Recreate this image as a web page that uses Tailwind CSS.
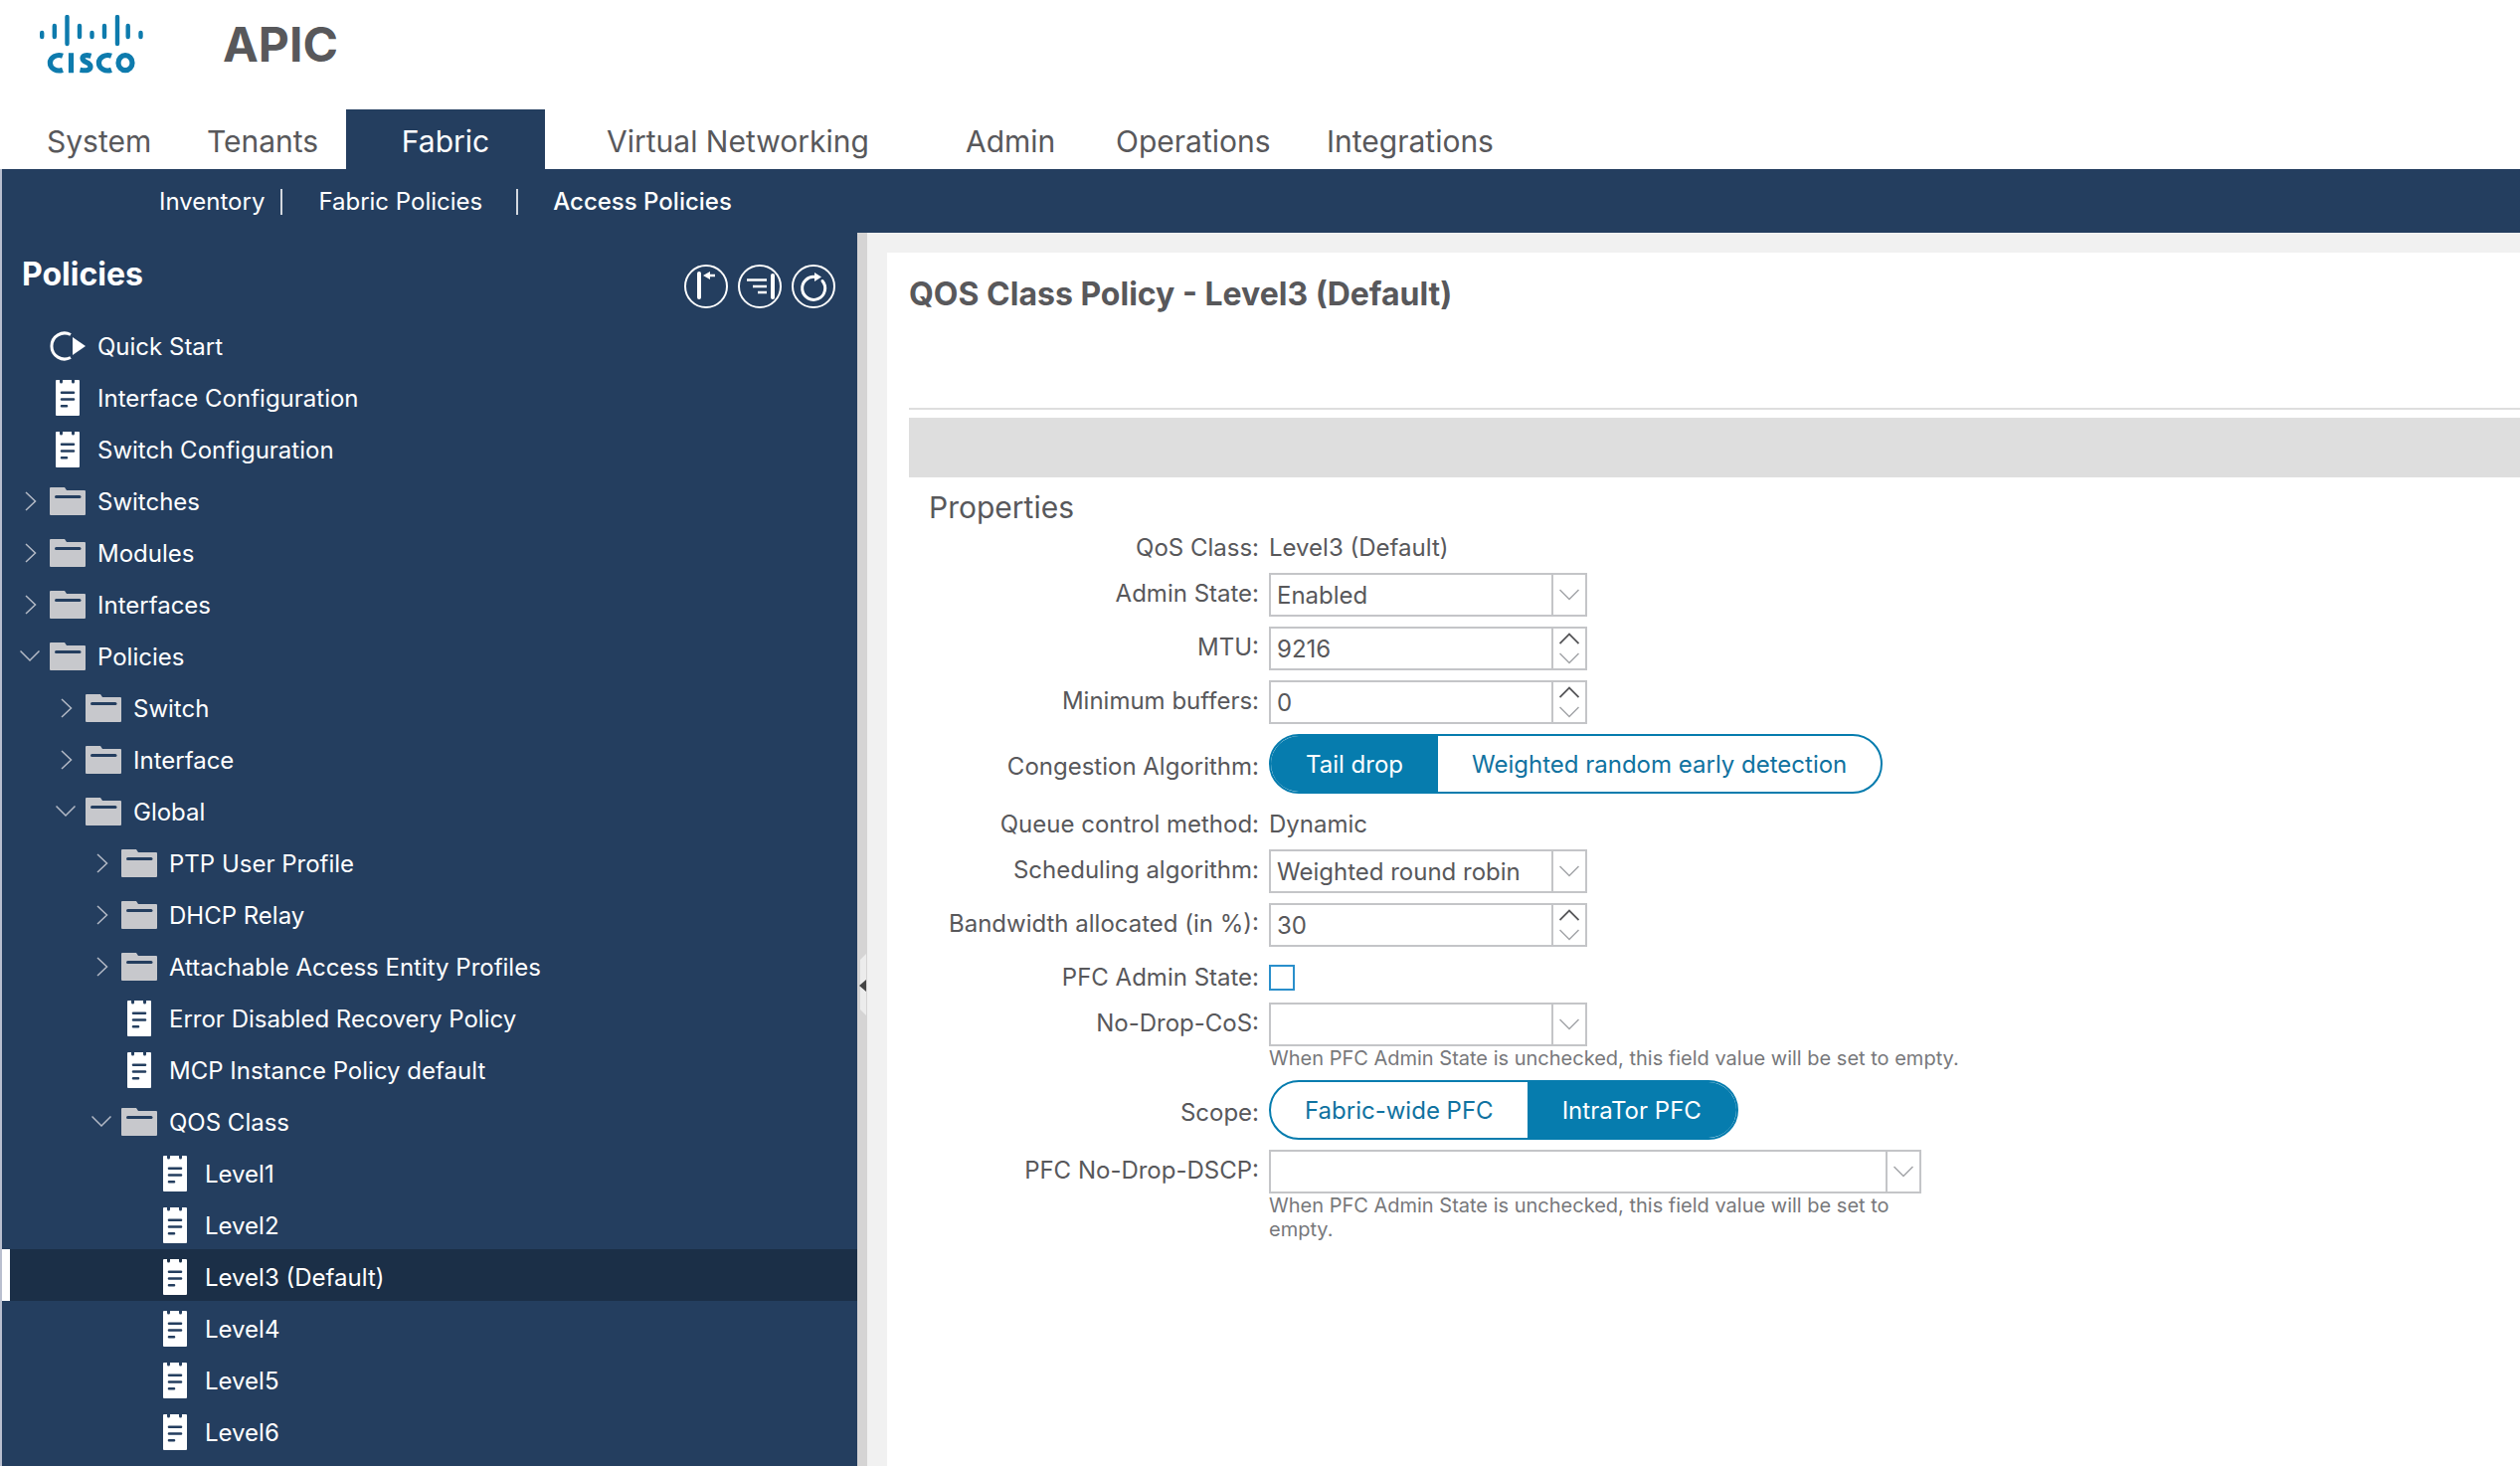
<!DOCTYPE html>
<html lang="en">
<head>
<meta charset="utf-8">
<meta name="viewport" content="width=device-width, initial-scale=1">
<title>APIC</title>
<script src="https://cdn.jsdelivr.net/npm/@tailwindcss/browser@4"></script>
</head>
<body class="flex min-h-screen flex-col bg-white font-['Inter',sans-serif] text-2xl leading-[30px] text-[#58585b]">

<svg class="hidden" aria-hidden="true">
  <symbol id="doc" viewBox="0 0 24 36"><path fill="#fff" d="M1 0H4V2a1 1 0 0 0 3 0V0H16V2a1 1 0 0 0 3 0V0H23a1 1 0 0 1 1 1V35a1 1 0 0 1-1 1H1a1 1 0 0 1-1-1V1a1 1 0 0 1 1-1Z"/><path stroke="#243e5f" stroke-width="2.6" stroke-linecap="round" d="M6 12.700H18M6 19.500H18M6 26.200H11"/></symbol>
  <symbol id="folder" viewBox="0 0 36 28"><path fill="#c7c8cc" d="M1 0H15L17 3H35a1 1 0 0 1 1 1V27a1 1 0 0 1-1 1H1a1 1 0 0 1-1-1V1a1 1 0 0 1 1-1Z"/><path stroke="#243e5f" stroke-width="3" stroke-linecap="round" d="M6.500 9.500H30"/></symbol>
  <symbol id="right" viewBox="0 0 20 20"><path fill="none" stroke="#b4bac6" stroke-width="1.500" d="M6 1L15.500 10L6 19"/></symbol>
  <symbol id="down" viewBox="0 0 20 20"><path fill="none" stroke="#b4bac6" stroke-width="1.500" d="M.5 4.500L10 14L19.500 4.500"/></symbol>
  <symbol id="pick" viewBox="0 0 20 12"><path fill="none" stroke="#a3a5a8" stroke-width="1.500" d="M.5 1L10 10.500L19.500 1"/></symbol>
  <symbol id="up" viewBox="0 0 20 12"><path fill="none" stroke="#58585b" stroke-width="1.800" d="M.5 11L10 1.500L19.500 11"/></symbol>
</svg>

<header>
  <div class="flex h-[110px] items-start pl-10 pt-[15px]">
    <svg class="h-[60px] w-[104px]" viewBox="0 0 104 60" role="img" aria-label="Cisco">
      <g stroke="#0e7bad" stroke-width="4.400" stroke-linecap="round"><path d="M2.200 18V22M14.800 11V22M27.500 2V29M40 11V22M52.500 18V22M65 11V22M78 2V29M88.700 11V22M101.500 18V22"/></g>
      <g fill="none" stroke="#0e7bad" stroke-width="5.200"><path d="M23 41.200A9 7.700 0 1 0 23 55.300M31.500 38.200V58.300M51.500 41.200C46 39.700 43 41 43 43.600C43 48.500 51 46.800 51 52C51 55.600 47 56.500 40.500 55.200M72 41.200A9 7.700 0 1 0 72 55.300"/><ellipse cx="86" cy="48.200" rx="7" ry="7.500"/></g>
    </svg>
    <h1 class="ml-20 text-5xl leading-[60px] font-bold">APIC</h1>
  </div>
  <nav class="flex h-[60px] items-stretch text-[30px] leading-9" aria-label="Main">
    <a href="#" class="w-[208px] pt-3.5 pl-[47px]">System</a>
    <a href="#" class="w-[140px] pt-3.5">Tenants</a>
    <a href="#" class="w-[200px] bg-[#243e5f] pt-3.5 text-center text-white">Fabric</a>
    <a href="#" class="ml-[62px] w-[361px] pt-3.5">Virtual Networking</a>
    <a href="#" class="w-[151px] pt-3.5">Admin</a>
    <a href="#" class="w-[212px] pt-3.5">Operations</a>
    <a href="#" class="pt-3.5">Integrations</a>
  </nav>
</header>

<div class="flex flex-1 flex-col border-l-2 border-[#b9bfcf]">
  <nav class="flex h-16 items-center bg-[#243e5f] pt-0.5 pl-[158px] text-white" aria-label="Fabric">
    <a href="#">Inventory</a>
    <span class="ml-4 h-[26px] w-0.5 bg-white/80"></span>
    <a href="#" class="ml-9">Fabric Policies</a>
    <span class="ml-[34px] h-[26px] w-0.5 bg-white/80"></span>
    <a href="#" class="ml-[35px] font-medium">Access Policies</a>
  </nav>

  <div class="flex flex-1">
    <aside class="w-[860px] shrink-0 bg-[#243e5f] text-white">
      <div class="flex h-[86px] justify-between pr-[22px] pl-5 pt-6">
        <h2 class="text-[32px] leading-9 font-bold">Policies</h2>
        <div class="flex gap-2.5 pt-2">
          <button type="button" aria-label="Collapse" class="size-11"><svg class="size-11" viewBox="0 0 44 44" fill="none" stroke="#fff"><circle cx="22" cy="22" r="21" stroke-width="2"/><path stroke-width="4" stroke-linecap="round" d="M15 9V33"/><path stroke-width="2.500" d="M22 11H31"/><path fill="#fff" stroke="none" d="M19 11L26 7V15Z"/></svg></button>
          <button type="button" aria-label="Align" class="size-11"><svg class="size-11" viewBox="0 0 44 44" fill="none" stroke="#fff"><circle cx="22" cy="22" r="21" stroke-width="2"/><path stroke-width="4" stroke-linecap="round" d="M35 11V33"/><path stroke-width="2.500" d="M9 15.500H29M15 22H29M20 28H29"/></svg></button>
          <button type="button" aria-label="Refresh" class="size-11"><svg class="size-11" viewBox="0 0 44 44" fill="none" stroke="#fff"><circle cx="22" cy="22" r="21" stroke-width="2"/><path stroke-width="3" stroke-linecap="round" d="M24 12.500A11.500 11.500 0 1 0 31 16.500"/><path fill="#fff" stroke="none" d="M23 8L30 12.500L23 17Z"/></svg></button>
        </div>
      </div>
      <ul class="[&_svg]:-mt-0.5">
        <li><a href="#" class="flex h-[52px] items-center pt-1.5 pl-12"><svg class="mr-3 h-[30px] w-9" viewBox="0 0 36 30"><path fill="none" stroke="#fff" stroke-width="3" d="M21 3.500A13 13 0 1 0 21 26.500"/><path fill="#fff" d="M23 6L36 15L23 24Z"/></svg>Quick Start</a></li>
        <li><a href="#" class="flex h-[52px] items-center pt-1.5 pl-[54px]"><svg class="mr-[18px] h-9 w-6"><use href="#doc"/></svg>Interface Configuration</a></li>
        <li><a href="#" class="flex h-[52px] items-center pt-1.5 pl-[54px]"><svg class="mr-[18px] h-9 w-6"><use href="#doc"/></svg>Switch Configuration</a></li>
        <li><a href="#" class="flex h-[52px] items-center pt-1.5 pl-[18px]"><svg class="mr-2.5 size-5"><use href="#right"/></svg><svg class="mr-3 h-7 w-9"><use href="#folder"/></svg>Switches</a></li>
        <li><a href="#" class="flex h-[52px] items-center pt-1.5 pl-[18px]"><svg class="mr-2.5 size-5"><use href="#right"/></svg><svg class="mr-3 h-7 w-9"><use href="#folder"/></svg>Modules</a></li>
        <li><a href="#" class="flex h-[52px] items-center pt-1.5 pl-[18px]"><svg class="mr-2.5 size-5"><use href="#right"/></svg><svg class="mr-3 h-7 w-9"><use href="#folder"/></svg>Interfaces</a></li>
        <li><a href="#" class="flex h-[52px] items-center pt-1.5 pl-[18px]"><svg class="mr-2.5 size-5"><use href="#down"/></svg><svg class="mr-3 h-7 w-9"><use href="#folder"/></svg>Policies</a></li>
        <li><a href="#" class="flex h-[52px] items-center pt-1.5 pl-[54px]"><svg class="mr-2.5 size-5"><use href="#right"/></svg><svg class="mr-3 h-7 w-9"><use href="#folder"/></svg>Switch</a></li>
        <li><a href="#" class="flex h-[52px] items-center pt-1.5 pl-[54px]"><svg class="mr-2.5 size-5"><use href="#right"/></svg><svg class="mr-3 h-7 w-9"><use href="#folder"/></svg>Interface</a></li>
        <li><a href="#" class="flex h-[52px] items-center pt-1.5 pl-[54px]"><svg class="mr-2.5 size-5"><use href="#down"/></svg><svg class="mr-3 h-7 w-9"><use href="#folder"/></svg>Global</a></li>
        <li><a href="#" class="flex h-[52px] items-center pt-1.5 pl-[90px]"><svg class="mr-2.5 size-5"><use href="#right"/></svg><svg class="mr-3 h-7 w-9"><use href="#folder"/></svg>PTP User Profile</a></li>
        <li><a href="#" class="flex h-[52px] items-center pt-1.5 pl-[90px]"><svg class="mr-2.5 size-5"><use href="#right"/></svg><svg class="mr-3 h-7 w-9"><use href="#folder"/></svg>DHCP Relay</a></li>
        <li><a href="#" class="flex h-[52px] items-center pt-1.5 pl-[90px]"><svg class="mr-2.5 size-5"><use href="#right"/></svg><svg class="mr-3 h-7 w-9"><use href="#folder"/></svg>Attachable Access Entity Profiles</a></li>
        <li><a href="#" class="flex h-[52px] items-center pt-1.5 pl-[126px]"><svg class="mr-[18px] h-9 w-6"><use href="#doc"/></svg>Error Disabled Recovery Policy</a></li>
        <li><a href="#" class="flex h-[52px] items-center pt-1.5 pl-[126px]"><svg class="mr-[18px] h-9 w-6"><use href="#doc"/></svg>MCP Instance Policy default</a></li>
        <li><a href="#" class="flex h-[52px] items-center pt-1.5 pl-[90px]"><svg class="mr-2.5 size-5"><use href="#down"/></svg><svg class="mr-3 h-7 w-9"><use href="#folder"/></svg>QOS Class</a></li>
        <li><a href="#" class="flex h-[52px] items-center pt-1.5 pl-[162px]"><svg class="mr-[18px] h-9 w-6"><use href="#doc"/></svg>Level1</a></li>
        <li><a href="#" class="flex h-[52px] items-center pt-1.5 pl-[162px]"><svg class="mr-[18px] h-9 w-6"><use href="#doc"/></svg>Level2</a></li>
        <li><a href="#" aria-current="page" class="flex h-[52px] items-center border-l-8 border-white bg-[#1b2f47] pt-1.5 pl-[154px]"><svg class="mr-[18px] h-9 w-6"><use href="#doc"/></svg>Level3 (Default)</a></li>
        <li><a href="#" class="flex h-[52px] items-center pt-1.5 pl-[162px]"><svg class="mr-[18px] h-9 w-6"><use href="#doc"/></svg>Level4</a></li>
        <li><a href="#" class="flex h-[52px] items-center pt-1.5 pl-[162px]"><svg class="mr-[18px] h-9 w-6"><use href="#doc"/></svg>Level5</a></li>
        <li><a href="#" class="flex h-[52px] items-center pt-1.5 pl-[162px]"><svg class="mr-[18px] h-9 w-6"><use href="#doc"/></svg>Level6</a></li>
      </ul>
    </aside>

    <div class="flex w-2.5 shrink-0 items-start justify-end bg-[#d5d4d4] pt-[724px]">
      <button type="button" aria-label="Collapse panel"><svg class="h-16 w-2" viewBox="0 0 8 64"><path fill="#ececec" d="M7 1V63L1 57V7Z"/><path fill="#444" d="M0 33L7 27V39Z"/></svg></button>
    </div>

    <main class="min-w-0 flex-1 bg-[#f1f1f1] pt-5 pl-5">
      <div class="h-full bg-white pt-6 pl-[22px]">
        <h2 class="h-[132px] text-[32px] leading-9 font-bold">QOS Class Policy - Level3 (Default)</h2>
        <div class="border-t-2 border-[#dedede]"></div>
        <div class="mt-2 h-[60px] bg-[#dedede]"></div>
        <h3 class="mt-3 pl-5 text-[30px] leading-9">Properties</h3>

        <form class="mt-2 grid grid-cols-[352px_1fr] gap-x-2.5 gap-y-2.5">
          <span class="h-[30px] text-right">QoS Class:</span>
          <span>Level3 (Default)</span>

          <label for="admin" class="pt-1.5 text-right">Admin State:</label>
          <div class="relative w-80">
            <select id="admin" class="block h-11 w-full appearance-none border-2 border-[#c4c5c8] pt-0.5 pl-1.5"><option>Enabled</option></select>
            <span class="pointer-events-none absolute inset-y-0.5 right-0.5 flex w-[34px] items-center justify-center border-l-2 border-[#c4c5c8]"><svg class="h-3 w-5"><use href="#pick"/></svg></span>
          </div>

          <label for="mtu" class="pt-1.5 text-right">MTU:</label>
          <div class="flex h-11 w-80 border-2 border-[#c4c5c8]">
            <input id="mtu" type="text" inputmode="numeric" value="9216" class="min-w-0 flex-1 pt-0.5 pl-1.5">
            <div class="flex w-[34px] flex-col border-l-2 border-[#c4c5c8]">
              <button type="button" aria-label="Increase" class="flex flex-1 items-center justify-center"><svg class="h-3 w-5"><use href="#up"/></svg></button>
              <button type="button" aria-label="Decrease" class="flex flex-1 items-center justify-center"><svg class="h-3 w-5"><use href="#pick"/></svg></button>
            </div>
          </div>

          <label for="buffers" class="pt-1.5 text-right">Minimum buffers:</label>
          <div class="flex h-11 w-80 border-2 border-[#c4c5c8]">
            <input id="buffers" type="text" inputmode="numeric" value="0" class="min-w-0 flex-1 pt-0.5 pl-1.5">
            <div class="flex w-[34px] flex-col border-l-2 border-[#c4c5c8]">
              <button type="button" aria-label="Increase" class="flex flex-1 items-center justify-center"><svg class="h-3 w-5"><use href="#up"/></svg></button>
              <button type="button" aria-label="Decrease" class="flex flex-1 items-center justify-center"><svg class="h-3 w-5"><use href="#pick"/></svg></button>
            </div>
          </div>

          <span id="congestion" class="pt-[18px] text-right">Congestion Algorithm:</span>
          <div role="group" aria-labelledby="congestion" class="flex h-[60px] w-fit overflow-hidden rounded-full border-2 border-[#067cae]">
            <button type="button" aria-pressed="true" class="bg-[#067cae] px-[35px] pt-0.5 text-white">Tail drop</button>
            <button type="button" aria-pressed="false" class="px-[34px] pt-0.5 text-[#1072a0]">Weighted random early detection</button>
          </div>

          <span class="h-9 pt-1.5 text-right">Queue control method:</span>
          <span class="pt-1.5">Dynamic</span>

          <label for="scheduling" class="pt-1.5 text-right">Scheduling algorithm:</label>
          <div class="relative w-80">
            <select id="scheduling" class="block h-11 w-full appearance-none border-2 border-[#c4c5c8] pt-0.5 pl-1.5"><option>Weighted round robin</option></select>
            <span class="pointer-events-none absolute inset-y-0.5 right-0.5 flex w-[34px] items-center justify-center border-l-2 border-[#c4c5c8]"><svg class="h-3 w-5"><use href="#pick"/></svg></span>
          </div>

          <label for="bandwidth" class="pt-1.5 text-right">Bandwidth allocated (in %):</label>
          <div class="flex h-11 w-80 border-2 border-[#c4c5c8]">
            <input id="bandwidth" type="text" inputmode="numeric" value="30" class="min-w-0 flex-1 pt-0.5 pl-1.5">
            <div class="flex w-[34px] flex-col border-l-2 border-[#c4c5c8]">
              <button type="button" aria-label="Increase" class="flex flex-1 items-center justify-center"><svg class="h-3 w-5"><use href="#up"/></svg></button>
              <button type="button" aria-label="Decrease" class="flex flex-1 items-center justify-center"><svg class="h-3 w-5"><use href="#pick"/></svg></button>
            </div>
          </div>

          <label for="pfc" class="h-9 pt-1.5 text-right">PFC Admin State:</label>
          <div class="flex pt-2"><input id="pfc" type="checkbox" class="size-[26px] appearance-none border-2 border-[#2a8fcb]"></div>

          <label for="cos" class="pt-1.5 text-right">No-Drop-CoS:</label>
          <div>
            <div class="relative w-80">
              <select id="cos" class="block h-11 w-full appearance-none border-2 border-[#c4c5c8] pl-1.5"><option></option></select>
              <span class="pointer-events-none absolute inset-y-0.5 right-0.5 flex w-[34px] items-center justify-center border-l-2 border-[#c4c5c8]"><svg class="h-3 w-5"><use href="#pick"/></svg></span>
            </div>
            <p class="text-xl leading-6 text-[#77787b]">When PFC Admin State is unchecked, this field value will be set to empty.</p>
          </div>

          <span id="scope" class="pt-[18px] text-right">Scope:</span>
          <div role="group" aria-labelledby="scope" class="flex h-[60px] w-fit overflow-hidden rounded-full border-2 border-[#067cae]">
            <button type="button" aria-pressed="false" class="px-[34px] pt-0.5 text-[#1072a0]">Fabric-wide PFC</button>
            <button type="button" aria-pressed="true" class="bg-[#067cae] px-[35px] pt-0.5 text-white">IntraTor PFC</button>
          </div>

          <label for="dscp" class="pt-1.5 text-right">PFC No-Drop-DSCP:</label>
          <div class="w-[656px]">
            <div class="relative">
              <select id="dscp" class="block h-11 w-full appearance-none border-2 border-[#c4c5c8] pl-1.5"><option></option></select>
              <span class="pointer-events-none absolute inset-y-0.5 right-0.5 flex w-[34px] items-center justify-center border-l-2 border-[#c4c5c8]"><svg class="h-3 w-5"><use href="#pick"/></svg></span>
            </div>
            <p class="text-xl leading-6 text-[#77787b]">When PFC Admin State is unchecked, this field value will be set to empty.</p>
          </div>
        </form>
      </div>
    </main>
  </div>
</div>
</body>
</html>
